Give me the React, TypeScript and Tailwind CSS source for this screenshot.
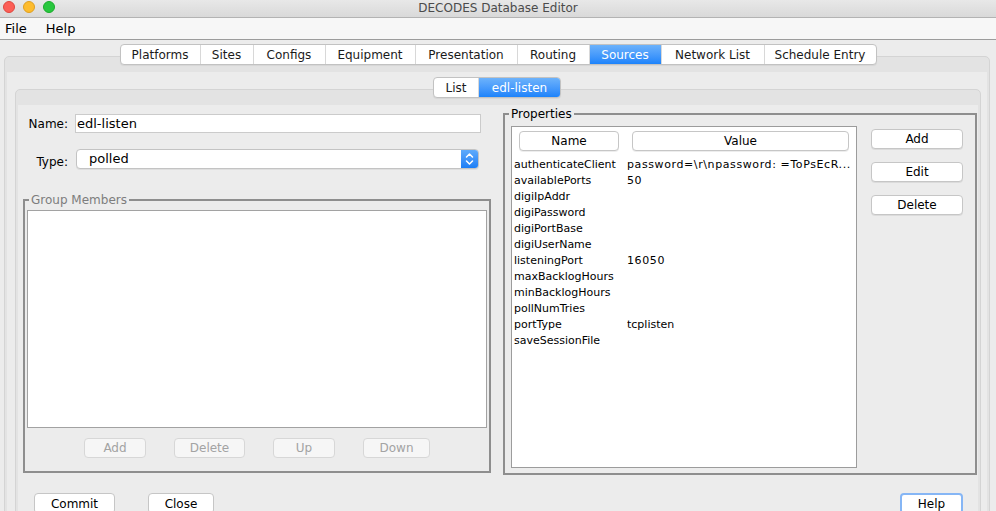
import type { ReactNode } from 'react';

const topTabs = [
    { label: 'Platforms', w: 'w-[79px]' },
    { label: 'Sites', w: 'w-[53px]' },
    { label: 'Configs', w: 'w-[72px]' },
    { label: 'Equipment', w: 'w-[90px]' },
    { label: 'Presentation', w: 'w-[102px]' },
    { label: 'Routing', w: 'w-[72px]' },
    { label: 'Sources', w: 'w-[72px]', active: true },
    { label: 'Network List', w: 'w-[103px]' },
    { label: 'Schedule Entry', w: 'w-[112px]' },
];

const editTabs = [
    { label: 'List', w: 'w-[44px]' },
    { label: 'edl-listen', w: 'w-[82px]', active: true },
];

const properties: { name: string; value: string; wide?: boolean }[] = [
    { name: 'authenticateClient', value: 'password=\\r\\npassword: =ToPsEcR...', wide: true },
    { name: 'availablePorts', value: '50', wide: true },
    { name: 'digiIpAddr', value: '' },
    { name: 'digiPassword', value: '' },
    { name: 'digiPortBase', value: '' },
    { name: 'digiUserName', value: '' },
    { name: 'listeningPort', value: '16050', wide: true },
    { name: 'maxBacklogHours', value: '' },
    { name: 'minBacklogHours', value: '' },
    { name: 'pollNumTries', value: '' },
    { name: 'portType', value: 'tcplisten' },
    { name: 'saveSessionFile', value: '' },
];

type Tab = { label: string; w: string; active?: boolean };

const TabStrip = ({ tabs }: { tabs: Tab[] }) => (
    <div className="flex h-[21px] rounded-[4px] border border-[#c2c2c2] bg-white overflow-hidden shadow-[0_1px_1px_rgba(0,0,0,0.06)]">
        {tabs.map((t, i) => (
            <div
                key={t.label}
                className={`${t.w} flex items-center justify-center text-[12px] leading-none ${i > 0 ? 'border-l border-[#d8d8d8]' : ''} ${t.active ? 'bg-linear-to-b from-[#6cb2fb] to-[#1b83fb] text-white border-[#3b8ff7]' : 'text-[#1a1a1a]'}`}
            >
                {t.label}
            </div>
        ))}
    </div>
);

const Btn = ({ children, className = '', disabled = false, focus = false }: { children: ReactNode; className?: string; disabled?: boolean; focus?: boolean }) => (
    <div
        className={`flex items-center justify-center h-[20px] rounded-[4px] text-[12px] leading-none ${disabled
            ? 'bg-[#f6f6f6] border border-[#d7d7d7] text-[#a3a3a3]'
            : focus
                ? 'bg-white border-2 border-[#86b6f5] text-black'
                : 'bg-white border border-[#c6c6c6] text-black shadow-[0_1px_0_rgba(0,0,0,0.07)]'
            } ${className}`}
    >
        {children}
    </div>
);

const TitleBar = () => (
    <div className="h-[18px] shrink-0 flex bg-linear-to-b from-[#e8e8e8] to-[#d9d9d9] border-b border-[#b3b3b3]">
        <div className="w-[70px] flex gap-[8px] pl-[3px] pt-[1px]">
            <span className="w-[12px] h-[12px] rounded-full bg-[#fc5f57] border border-[#de4840]" />
            <span className="w-[12px] h-[12px] rounded-full bg-[#fdbc2e] border border-[#de9f22]" />
            <span className="w-[12px] h-[12px] rounded-full bg-[#29c73f] border border-[#1aab2b]" />
        </div>
        <div className="flex-1 text-center text-[12px] leading-[16px] text-[#4b4b4b]">DECODES Database Editor</div>
        <div className="w-[70px]" />
    </div>
);

const MenuBar = () => (
    <div className="h-[22px] shrink-0 flex items-center gap-[19px] pl-[5px] bg-[#f7f7f7] border-b border-[#9c9c9c] text-[13px] text-black">
        <span>File</span>
        <span>Help</span>
    </div>
);

const Chevrons = () => (
    <svg width="9" height="14" viewBox="0 0 9 14" fill="none" stroke="white" strokeWidth="1.5" strokeLinecap="round" strokeLinejoin="round">
        <path d="M1.5 5 L4.5 2 L7.5 5" />
        <path d="M1.5 9 L4.5 12 L7.5 9" />
    </svg>
);

export default function App() {
    return (
        <div className="w-[996px] h-[511px] overflow-hidden bg-[#ececec] flex flex-col font-['DejaVu_Sans',sans-serif] text-black">
            <TitleBar />
            <MenuBar />

            <div className="shrink-0 flex flex-col pt-[4px]">
                {/* Main tabs */}
                <div className="flex justify-center relative z-10 -mb-[9px]">
                    <TabStrip tabs={topTabs} />
                </div>
                <div className="ml-[4px] mr-[6px] border border-[#d4d4d4] rounded-t-[5px] bg-[#e3e3e3] pt-[15px] px-[2px]">
                    <div className="bg-[#ececec] pt-[5px] pb-[40px] flex flex-col">
                        {/* List / edit tabs */}
                        <div className="flex justify-center relative z-10 -mb-[9px]">
                            <TabStrip tabs={editTabs} />
                        </div>
                        <div className="ml-[8px] mr-[6px] border border-[#d4d4d4] rounded-t-[5px] bg-[#e3e3e3] pt-[15px] px-[2px]">
                            <div className="bg-[#ececec] pb-[30px]">
                                <div className="flex">
                                    {/* Left column */}
                                    <div className="w-[485px] flex flex-col">
                                        <div className="mt-[9px] flex items-center h-[19px]">
                                            <span className="w-[50px] text-right text-[12px]">Name:</span>
                                            <div className="ml-[7px] w-[406px] h-[19px] bg-white border border-[#cbcbcb] flex items-center pl-[1px] text-[13px]">
                                                edl-listen
                                            </div>
                                        </div>
                                        <div className="mt-[16px] flex items-center h-[20px]">
                                            <span className="w-[50px] text-right text-[12px] translate-y-[3px]">Type:</span>
                                            <div className="ml-[8px] w-[403px] h-[20px] bg-white border border-[#c3c3c3] rounded-[4px] flex items-center overflow-hidden shadow-[0_1px_0_rgba(0,0,0,0.06)]">
                                                <span className="flex-1 pl-[12px] text-[13px]">polled</span>
                                                <div className="w-[17px] h-full bg-linear-to-b from-[#5eaafb] to-[#1a7ef6] flex items-center justify-center">
                                                    <Chevrons />
                                                </div>
                                            </div>
                                        </div>

                                        {/* Group Members */}
                                        <div className="relative mt-[30px] ml-[5px] w-[468px] border-2 border-[#8e8e8e] pt-[9px] px-[2px] pb-[13px]">
                                            <span className="absolute left-[4px] -top-[9px] px-[2px] bg-[#ececec] text-[12px] leading-[16px] text-[#7d7d7d]">Group Members</span>
                                            <div className="h-[218px] bg-white border border-[#a2a2a2]" />
                                            <div className="mt-[10px] flex justify-center gap-[28px]">
                                                <Btn disabled className="w-[62px]">Add</Btn>
                                                <Btn disabled className="w-[71px]">Delete</Btn>
                                                <Btn disabled className="w-[62px]">Up</Btn>
                                                <Btn disabled className="w-[67px]">Down</Btn>
                                            </div>
                                        </div>
                                    </div>

                                    {/* Properties */}
                                    <div className="relative mt-[8px] w-[474px] border-2 border-[#8e8e8e] pt-[11px] pl-[6px] pb-[5px] flex">
                                        <span className="absolute left-[4px] -top-[9px] px-[2px] bg-[#ececec] text-[12px] leading-[16px] text-black">Properties</span>
                                        <div className="w-[346px] h-[342px] bg-white border border-[#9c9c9c] pt-[4px]">
                                            <div className="flex pl-[7px] gap-[13px]">
                                                <Btn className="w-[100px]">Name</Btn>
                                                <Btn className="w-[217px]">Value</Btn>
                                            </div>
                                            <div className="mt-[6px] pl-[2px] text-[11px] leading-[16px]">
                                                {properties.map((p) => (
                                                    <div key={p.name} className="flex h-[16px]">
                                                        <span className="w-[113px] whitespace-nowrap">{p.name}</span>
                                                        <span className={`w-[228px] whitespace-nowrap overflow-hidden ${p.wide ? 'tracking-[0.6px]' : ''}`}>{p.value}</span>
                                                    </div>
                                                ))}
                                            </div>
                                        </div>
                                        <div className="ml-[14px] pt-[3px] flex flex-col gap-[13px]">
                                            <Btn className="w-[92px]">Add</Btn>
                                            <Btn className="w-[92px]">Edit</Btn>
                                            <Btn className="w-[92px]">Delete</Btn>
                                        </div>
                                    </div>
                                </div>

                                {/* Bottom buttons */}
                                <div className="mt-[18px] flex items-start">
                                    <Btn className="ml-[16px] w-[81px] h-[21px]">Commit</Btn>
                                    <Btn className="ml-[33px] w-[66px] h-[21px]">Close</Btn>
                                    <Btn focus className="ml-auto mr-[15px] w-[63px] h-[21px]">Help</Btn>
                                </div>
                            </div>
                        </div>
                    </div>
                </div>
            </div>
        </div>
    );
}
